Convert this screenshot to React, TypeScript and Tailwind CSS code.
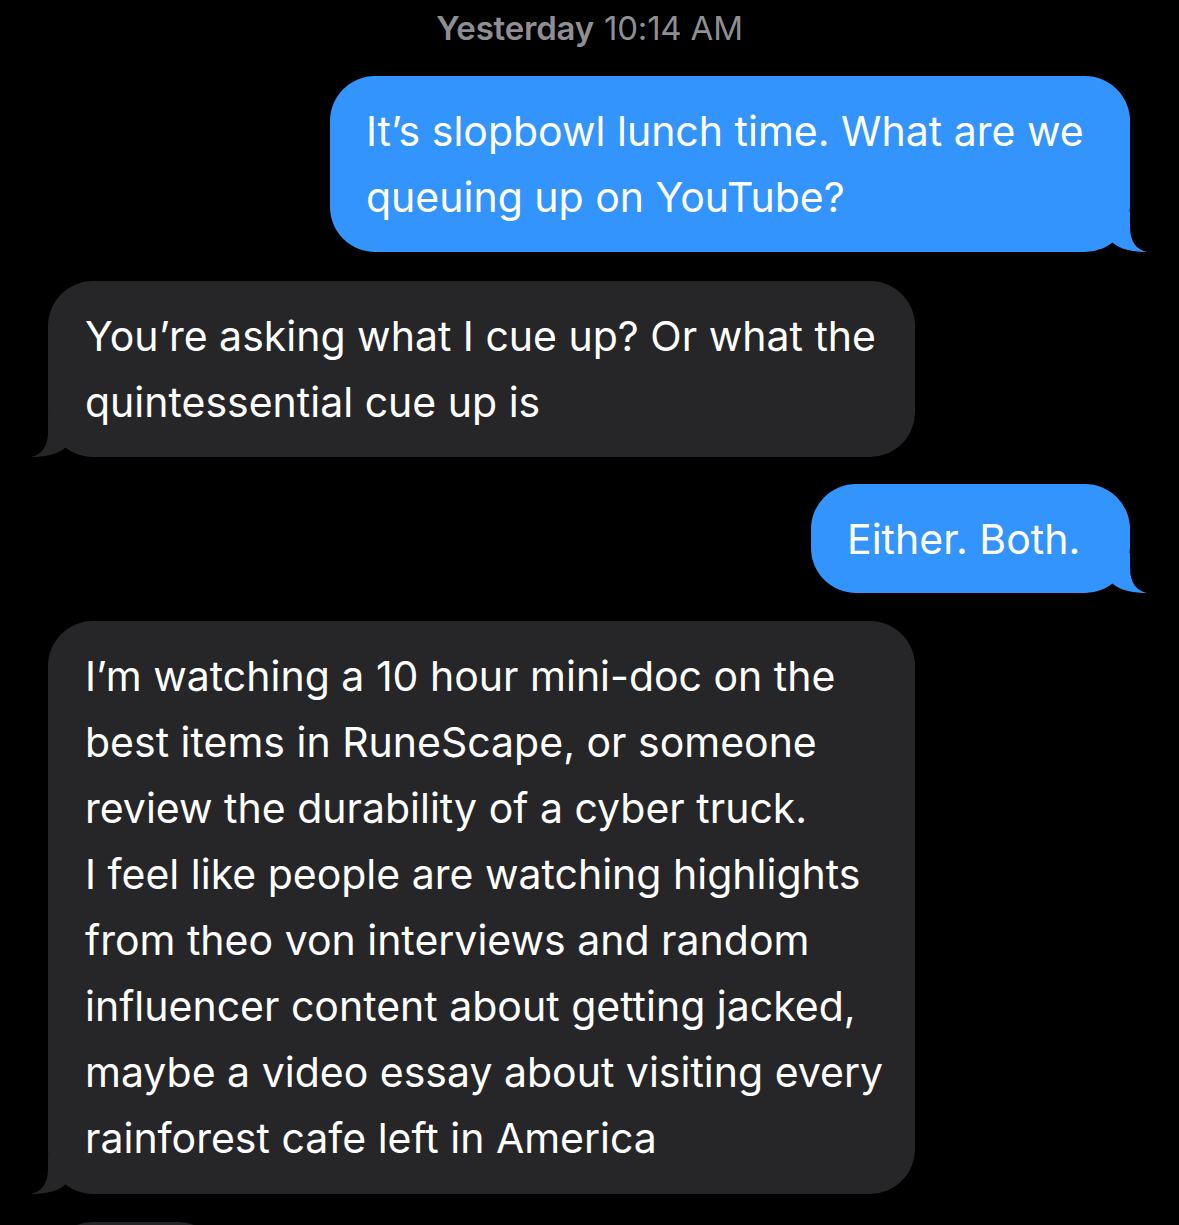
import React from "react";

const BLUE = "#3294fc";
const GRAY = "#262628";

function Tail({ side, color }: { side: "left" | "right"; color: string }) {
  if (side === "right") {
    return (
      <svg className="absolute bottom-0 right-[-20px]" width="45" height="40" viewBox="0 0 45 40">
        <path d="M0 0 L25 0 L25 15 C25 30 32 38 42 40 C30 40 15 38 7 30 Z" fill={color} />
      </svg>
    );
  }
  return (
    <svg className="absolute bottom-0 left-[-20px]" width="45" height="40" viewBox="0 0 45 40">
      <path d="M45 0 L20 0 L20 15 C20 30 13 38 3 40 C15 40 30 38 38 30 Z" fill={color} />
    </svg>
  );
}

function Sent({ lines, width, height, mt }: { lines: string[]; width: string; height: string; mt: string }) {
  return (
    <div className={`relative shrink-0 self-end mr-[49px] ${mt} ${width} ${height} rounded-[45px] bg-[#3294fc] pl-[36px] pt-[22px]`}>
      {lines.map((l, i) => (
        <div key={i} className="whitespace-nowrap text-[41px] leading-[66px] tracking-[0px] text-white">
          {l}
        </div>
      ))}
      <Tail side="right" color={BLUE} />
    </div>
  );
}

function Received({ lines, width, height, mt, tail = true }: { lines: string[]; width: string; height: string; mt: string; tail?: boolean }) {
  return (
    <div className={`relative self-start ml-[48px] ${mt} ${width} ${height} shrink-0 rounded-[45px] bg-[#262628] pl-[37px] pt-[22px]`}>
      {lines.map((l, i) => (
        <div key={i} className="whitespace-nowrap text-[41px] leading-[66px] tracking-[0px] text-white">
          {l}
        </div>
      ))}
      {tail && <Tail side="left" color={GRAY} />}
    </div>
  );
}

export default function App() {
  return (
    <div className="w-[1179px] h-[1225px] overflow-hidden bg-black flex flex-col font-['Inter',sans-serif]">
      <div className="h-[57px] shrink-0 flex items-center justify-center text-[33px] text-[#8e8e93] tracking-[-0.2px]">
        <span className="font-semibold">Yesterday</span>
        <span className="ml-[10px]">10:14 AM</span>
      </div>
      <Sent
        mt="mt-[19px]"
        width="w-[800px]"
        height="h-[176px]"
        lines={["It\u2019s slopbowl lunch time. What are we", "queuing up on YouTube?"]}
      />
      <Received
        mt="mt-[29px]"
        width="w-[867px]"
        height="h-[176px]"
        lines={["You\u2019re asking what I cue up? Or what the", "quintessential cue up is"]}
      />
      <Sent mt="mt-[27px]" width="w-[319px]" height="h-[109px]" lines={["Either. Both."]} />
      <Received
        mt="mt-[28px]"
        width="w-[867px]"
        height="h-[573px]"
        lines={[
          "I\u2019m watching a 10 hour mini-doc on the",
          "best items in RuneScape, or someone",
          "review the durability of a cyber truck.",
          "I feel like people are watching highlights",
          "from theo von interviews and random",
          "influencer content about getting jacked,",
          "maybe a video essay about visiting every",
          "rainforest cafe left in America",
        ]}
      />
      <Received mt="mt-[28px]" width="w-[175px]" height="h-[109px]" lines={[]} tail={false} />
    </div>
  );
}
